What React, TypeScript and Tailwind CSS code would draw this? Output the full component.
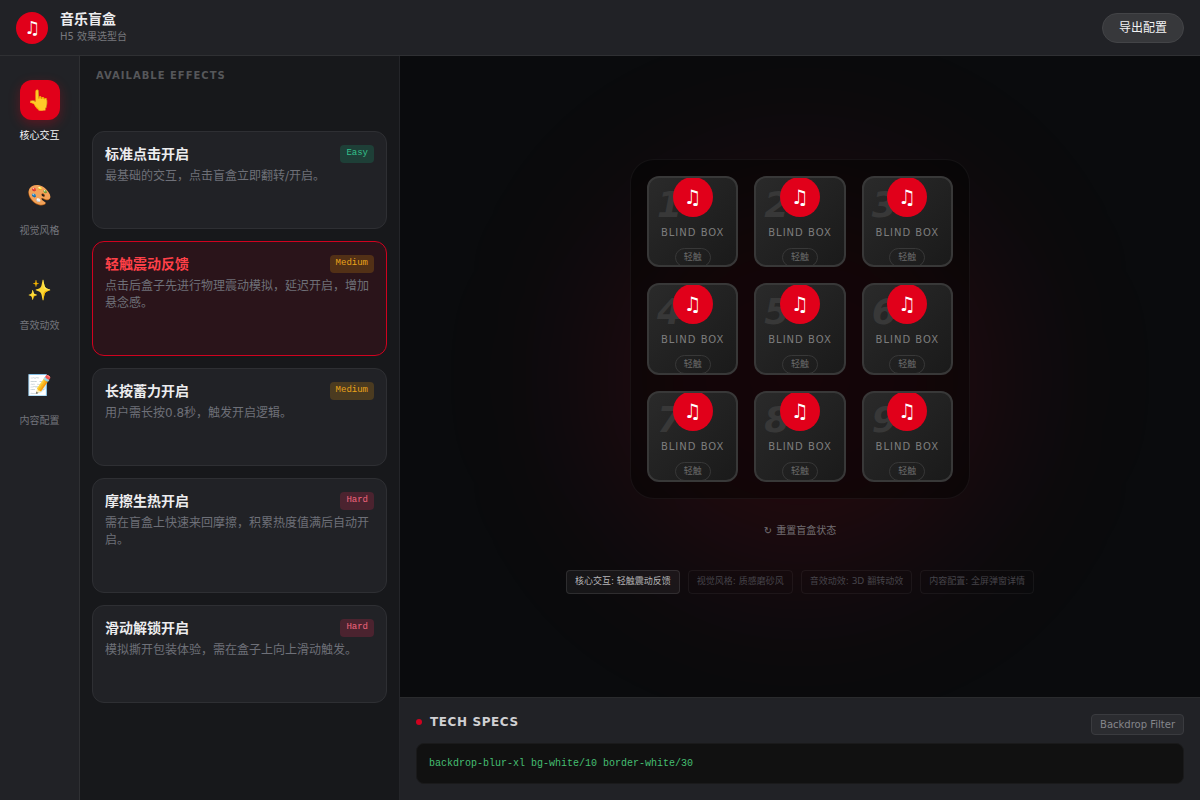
import React, { useState } from 'react';
import { clsx } from 'clsx';

type Level = 'Easy' | 'Medium' | 'Hard';

interface Effect {
  name: string;
  desc: string;
  level: Level;
}

const categories = [
  { icon: '👆', label: '核心交互' },
  { icon: '🎨', label: '视觉风格' },
  { icon: '✨', label: '音效动效' },
  { icon: '📝', label: '内容配置' },
];

const effects: Effect[] = [
  { name: '标准点击开启', desc: '最基础的交互，点击盲盒立即翻转/开启。', level: 'Easy' },
  { name: '轻触震动反馈', desc: '点击后盒子先进行物理震动模拟，延迟开启，增加悬念感。', level: 'Medium' },
  { name: '长按蓄力开启', desc: '用户需长按0.8秒，触发开启逻辑。', level: 'Medium' },
  { name: '摩擦生热开启', desc: '需在盲盒上快速来回摩擦，积累热度值满后自动开启。', level: 'Hard' },
  { name: '滑动解锁开启', desc: '模拟撕开包装体验，需在盒子上向上滑动触发。', level: 'Hard' },
];

const levelStyles: Record<Level, string> = {
  Easy: 'bg-[#1e3f37] text-[#34c08c]',
  Medium: 'bg-[#f59e0b]/20 text-[#eaa31a]',
  Hard: 'bg-[#4b232f] text-[#f0647c]',
};

const tags = ['视觉风格: 质感磨砂风', '音效动效: 3D 翻转动效', '内容配置: 全屏弹窗详情'];

const Header: React.FC = () => (
  <header className="flex h-14 shrink-0 items-center justify-between border-b border-[#2f3033] bg-[#212226] px-4">
    <div className="flex items-center gap-3">
      <div className="flex size-8 items-center justify-center rounded-full bg-[#e1001a] text-lg leading-none text-white">♫</div>
      <div>
        <h1 className="text-sm leading-[18px] font-bold text-[#ececee]">音乐盲盒</h1>
        <p className="text-[10px] leading-[17px] text-[#77787d]">H5 效果选型台</p>
      </div>
    </div>
    <button className="cursor-pointer rounded-full border border-[#434447] bg-[#37383b] px-4 py-1.5 text-xs leading-4 text-[#f2f2f3]">
      导出配置
    </button>
  </header>
);

interface SideNavProps {
  active: number;
  onSelect: (index: number) => void;
}

const SideNav: React.FC<SideNavProps> = ({ active, onSelect }) => (
  <nav className="flex w-20 shrink-0 flex-col gap-8 border-r border-[#2f3033] bg-[#212226] py-6">
    {categories.map((cat, idx) => (
      <button
        key={cat.label}
        onClick={() => onSelect(idx)}
        className={clsx(
          'flex cursor-pointer flex-col items-center gap-2 text-[10px] leading-[15px]',
          idx === active ? 'text-[#f4f4f5]' : 'text-[#73757c]'
        )}
      >
        <span
          className={clsx(
            'flex size-10 items-center justify-center rounded-xl text-xl',
            idx === active && 'bg-[#e1001a] shadow-[0_4px_12px_rgba(225,0,26,0.3)]'
          )}
        >
          {cat.icon}
        </span>
        {cat.label}
      </button>
    ))}
  </nav>
);

interface EffectCardProps {
  effect: Effect;
  selected: boolean;
  onSelect: () => void;
}

const EffectCard: React.FC<EffectCardProps> = ({ effect, selected, onSelect }) => (
  <button
    onClick={onSelect}
    className={clsx(
      'w-full cursor-pointer rounded-xl border px-3 pt-3 pb-[43px] text-left',
      selected ? 'border-[#d0021f] bg-[#2a141a]' : 'border-[#2e2f33] bg-[#212226]'
    )}
  >
    <span className="mb-1 flex items-center justify-between">
      <span className={clsx('text-sm leading-5 font-bold', selected ? 'text-[#ff4048]' : 'text-[#ececee]')}>
        {effect.name}
      </span>
      <span className={clsx('rounded px-1.5 pt-px pb-[3px] font-["Liberation_Mono",monospace] text-[9px] leading-[14px]', levelStyles[effect.level])}>
        {effect.level}
      </span>
    </span>
    <span className="block text-xs leading-[17px] text-[#6e7078]">{effect.desc}</span>
  </button>
);

const BlindBox: React.FC<{ index: number }> = ({ index }) => (
  <button className="relative flex aspect-square cursor-pointer flex-col items-center justify-center overflow-hidden rounded-xl border-2 border-[#383838] bg-linear-to-br from-[#2a2a2a] to-[#1a1a1a]">
    <span className="absolute top-2 left-2 text-4xl leading-[38px] font-black text-[#383838] italic">{index}</span>
    <span className="relative mb-2 flex size-10 shrink-0 items-center justify-center rounded-full bg-[#e1001a] text-xl leading-none text-white">
      ♫
    </span>
    <span className="text-[10px] leading-[15px] tracking-[1px] whitespace-nowrap text-[#7d7d7d]">BLIND BOX</span>
    <span className="mt-2 rounded-full border border-[#383838] px-2 py-0.5 text-[9px] leading-[13px] text-[#6b6b6b]">轻触</span>
  </button>
);

const Stage: React.FC<{ effectName: string }> = ({ effectName }) => (
  <section className="relative flex flex-1 flex-col items-center justify-center overflow-hidden bg-[#0a0b0d]">
    <div className="pointer-events-none absolute size-[400px] rounded-full bg-[#e1001a]/12 blur-[80px]" />

    <div className="relative grid w-[340px] grid-cols-3 gap-4 rounded-3xl border border-white/5 bg-black/40 p-4">
      {Array.from({ length: 9 }, (_, i) => (
        <BlindBox key={i} index={i + 1} />
      ))}
    </div>

    <button className="relative mt-6 flex cursor-pointer gap-1 text-[10px] leading-[15px] text-[#737074]">
      <span>↻</span>
      重置盲盒状态
    </button>

    <div className="relative mt-8 flex gap-2 text-[9px] leading-[14px]">
      <span className="rounded-sm border border-white/10 bg-white/5 px-2 pt-[3px] pb-[5px] text-[#b5b5b7]">核心交互: {effectName}</span>
      {tags.map((tag) => (
        <span key={tag} className="rounded-sm border border-white/5 px-2 pt-[3px] pb-[5px] text-[#46444a]">
          {tag}
        </span>
      ))}
    </div>
  </section>
);

const TechSpecs: React.FC = () => (
  <section className="shrink-0 border-t border-[#2a2b2d] bg-[#212226] p-4">
    <div className="mb-2 flex items-start justify-between">
      <h2 className="flex items-center gap-2 text-xs leading-4 font-bold tracking-wider text-[#d0d0d3]">
        <span className="size-1.5 rounded-full bg-[#d0021f]" />
        TECH SPECS
      </h2>
      <span className="rounded-sm border border-[#3a3b3f] bg-[#2b2c30] px-2 py-0.5 text-[10px] leading-[15px] text-[#85868b]">
        Backdrop Filter
      </span>
    </div>
    <pre className="rounded-lg border border-[#1a1a1b] bg-[#111111] px-3 py-3 font-['Liberation_Mono',monospace] text-[10px] leading-[15px] text-[#45bf72]">
      backdrop-blur-xl bg-white/10 border-white/30
    </pre>
  </section>
);

export default function App() {
  const [category, setCategory] = useState(0);
  const [selected, setSelected] = useState(1);

  return (
    <div className="flex h-screen flex-col overflow-hidden bg-[#0a0b0d] font-['DejaVu_Sans','Noto_Sans_CJK_SC',sans-serif]">
      <Header />
      <div className="flex min-h-0 flex-1">
        <SideNav active={category} onSelect={setCategory} />

        <aside className="w-80 shrink-0 overflow-hidden border-r border-[#242529] bg-[#17181b]">
          <h2 className="px-4 pt-3 text-[10px] leading-[15px] font-bold tracking-[1px] text-[#56575a]">AVAILABLE EFFECTS</h2>
          <div className="mt-12 flex flex-col gap-3 px-3">
            {effects.map((effect, idx) => (
              <EffectCard
                key={effect.name}
                effect={effect}
                selected={idx === selected}
                onSelect={() => setSelected(idx)}
              />
            ))}
          </div>
        </aside>

        <main className="flex min-w-0 flex-1 flex-col">
          <Stage effectName={effects[selected].name} />
          <TechSpecs />
        </main>
      </div>
    </div>
  );
}
